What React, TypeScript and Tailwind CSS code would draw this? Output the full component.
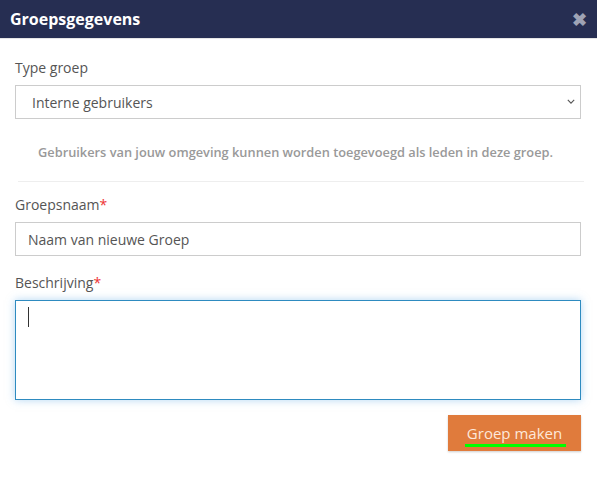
export default function App() {
  return (
    <div className="h-[482px] w-[597px] bg-white font-['Open_Sans',sans-serif] text-[#555]">
      <header className="flex h-[39px] items-center justify-between border-b border-[#e5e5e5] bg-[#262e52] px-[10px]">
        <h1 className="text-[16px] font-bold text-white">Groepsgegevens</h1>
        <span className="text-[18px] font-bold leading-none text-[#9ea3b5]">✖</span>
      </header>

      <div className="px-[15px] pt-[19px]">
        <label className="block text-[14px] leading-[20px] text-[#555]">Type groep</label>
        <div className="relative mt-[7px]">
          <select className="h-[34px] w-[566px] appearance-none border border-[#ccc] bg-white pl-[16px] text-[14px] text-[#555] outline-none">
            <option>Interne gebruikers</option>
          </select>
          <svg
            viewBox="0 0 10 6"
            className="pointer-events-none absolute right-[7px] top-[14px] h-[5px] w-[8px]"
            fill="none"
          >
            <path d="M1 1l4 4 4-4" stroke="#555" strokeWidth="1.4" />
          </svg>
        </div>

        <p className="mt-[24px] pr-[6px] text-center text-[12.8px] font-semibold text-[#999]">
          Gebruikers van jouw omgeving kunnen worden toegevoegd als leden in deze groep.
        </p>

        <div className="ml-[3px] mr-[-2px] mt-[19px] border-t border-[#eee]" />

        <label className="mt-[13px] block text-[14px] leading-[20px] text-[#555]">
          Groepsnaam<span className="text-[#e33]">*</span>
        </label>
        <input
          readOnly
          value="Naam van nieuwe Groep"
          className="mt-[7px] h-[34px] w-[566px] border border-[#ccc] bg-white pl-[12px] text-[14px] text-[#555] outline-none"
        />

        <label className="mt-[17px] block text-[14px] leading-[20px] text-[#555]">
          Beschrijving<span className="text-[#e33]">*</span>
        </label>
        <div className="mt-[7px] h-[100px] w-[566px] border border-[#2e8bc0] bg-white pl-[12px] pt-[6px] shadow-[0_0_8px_rgba(102,175,233,0.5)]">
          <div className="h-[20px] w-px bg-[#333]" />
        </div>

        <div className="mt-[15px] flex justify-end pr-[1px]">
          <button className="relative h-[36px] w-[133px] bg-[#e07b3c] text-[15px] text-[#fde8da] shadow-[0_1px_2px_rgba(0,0,0,0.2)]">
            Groep maken
            <span className="absolute bottom-[4px] left-[17px] h-[3px] w-[101px] bg-[#00ff00]" />
          </button>
        </div>
      </div>
    </div>
  );
}
